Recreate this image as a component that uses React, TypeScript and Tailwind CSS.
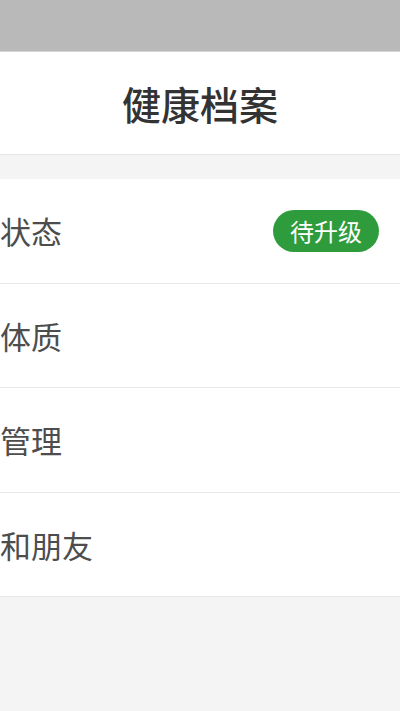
const rows = [
  { label: '状态', badge: '待升级' },
  { label: '体质' },
  { label: '管理' },
  { label: '和朋友' },
];

export default function App() {
  return (
    <div
      className="w-[400px] h-[711px] bg-[#f4f4f4] flex flex-col overflow-hidden"
      style={{ fontFamily: '"Noto Sans CJK SC", "Noto Sans", sans-serif' }}
    >
      {/* status bar */}
      <div className="h-[52px] bg-[#b9b9b9] border-b border-[#d6d6d6]" />

      {/* header */}
      <div className="h-[103px] bg-white border-b border-[#e6e6e6] flex items-center justify-center">
        <h1 className="text-[39px] leading-none font-medium text-[#333333]">健康档案</h1>
      </div>

      {/* list */}
      <div className="mt-[24px] bg-white flex flex-col">
        {rows.map((row) => (
          <div
            key={row.label}
            className="h-[104.5px] flex items-center justify-between border-b border-[#e8e8e8] pr-[21px]"
          >
            <span className="text-[31px] leading-none text-[#4d4d4d]">{row.label}</span>
            {row.badge && (
              <span className="h-[42px] w-[106px] rounded-full bg-[#2e9c3c] text-white text-[24px] leading-none flex items-center justify-center">
                {row.badge}
              </span>
            )}
          </div>
        ))}
      </div>
    </div>
  );
}
